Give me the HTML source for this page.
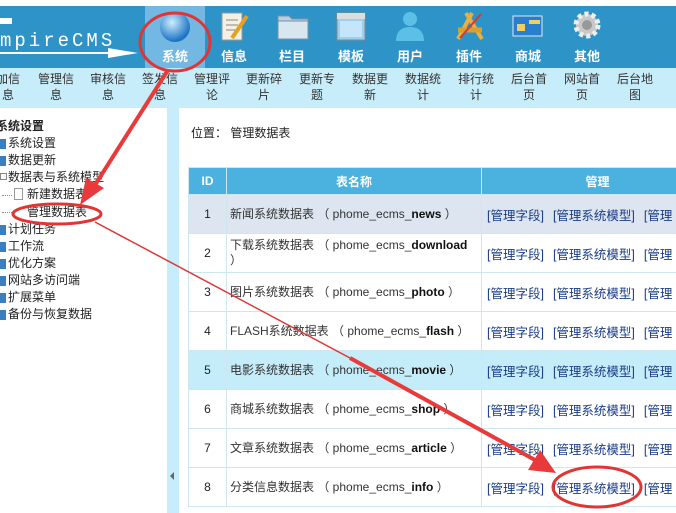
<!DOCTYPE html>
<html><head><meta charset="utf-8"><style>
*{margin:0;padding:0;box-sizing:border-box}
body{width:676px;height:513px;overflow:hidden;position:relative;background:#fff;font-family:"Liberation Sans","Noto Sans CJK SC",sans-serif;font-size:12px;color:#222}
.a{position:absolute}
#hdr{left:0;top:6px;width:676px;height:62px;background:#2e93c6}
#sel{left:145px;top:6px;width:60px;height:62px;background:#72b8e2}
.lbl{color:#fff;font-weight:bold;font-size:13px;width:50px;text-align:center;top:46px}
#nav{left:0;top:68px;width:676px;height:40px;background:#c8edfa}
.ni{top:71px;width:44px;text-align:center;line-height:16px;font-size:12px;color:#333}
#div{left:167px;top:108px;width:12px;height:405px;background:#c8edfa}
.tree{left:8px;font-size:12px;line-height:17px;color:#222}
.tree i{position:absolute;left:-8px;top:4px;width:6px;height:10px;background:#3a7fc1}
table{position:absolute;left:188px;top:167px;width:525px;table-layout:fixed;border-collapse:collapse;border:1px solid #7fb7cf}
td,th{border:1px solid #cfe6ef;font-size:12px}
th{background:#4bb1de;color:#fff;height:27px;font-weight:bold}
td{height:39px}
td.id{text-align:center}
td.n{padding-left:3px;line-height:15px;font-size:12px;color:#333}
td.m{color:#1a3c86;padding-left:5px;white-space:nowrap;font-size:12.5px}
td.m span{margin-right:9px}
b{font-weight:bold;color:#111}
</style></head><body>
<div class="a" id="hdr"></div>
<div class="a" id="sel"></div>
<div class="a" style="left:0;top:30px;color:#fff;font-size:19px;letter-spacing:3px;font-family:'Liberation Mono',monospace">mpireCMS</div>
<div class="a" style="left:0;top:18px;width:12px;height:6px;background:#fff"></div>
<div class="a" style="left:0;top:52px;width:112px;height:2px;background:#fff"></div>
<svg class="a" style="left:108px;top:46px" width="32" height="14"><polygon points="0,2 30,7 0,12" fill="#fff"/></svg>
<div class="a" style="left:160px;top:12px;width:30px;height:30px;border-radius:50%;background:radial-gradient(circle at 40% 35%,#cdeeff,#1d74c6 70%)"></div>
<svg class="a" style="left:220px;top:12px" width="30" height="30"><rect x="2" y="1" width="20" height="27" fill="#f4f1e4" stroke="#999"/><line x1="6" y1="8" x2="18" y2="8" stroke="#888"/><line x1="6" y1="13" x2="18" y2="13" stroke="#888"/><line x1="6" y1="18" x2="16" y2="18" stroke="#888"/><line x1="12" y1="26" x2="27" y2="4" stroke="#e8a020" stroke-width="4"/></svg>
<svg class="a" style="left:277px;top:12px" width="32" height="30"><path d="M1 4h11l3 3h16v20H1z" fill="#b9cfe0" stroke="#7a90a5"/><rect x="1" y="9" width="30" height="18" fill="#d8e6f0" stroke="#7a90a5"/></svg>
<svg class="a" style="left:336px;top:12px" width="30" height="30"><rect x="1" y="1" width="28" height="27" fill="#9bd0f0" stroke="#888"/><rect x="1" y="1" width="28" height="6" fill="#ddd"/><rect x="4" y="9" width="22" height="16" fill="#c5e6fa"/></svg>
<svg class="a" style="left:394px;top:10px" width="32" height="32"><circle cx="16" cy="9" r="7" fill="#5cc0e6"/><path d="M2 31c0-10 6-14 14-14s14 4 14 14z" fill="#5cc0e6"/></svg>
<svg class="a" style="left:454px;top:10px" width="32" height="32"><line x1="4" y1="29" x2="18" y2="3" stroke="#e8b040" stroke-width="4"/><line x1="12" y1="3" x2="28" y2="29" stroke="#e8b040" stroke-width="4"/><line x1="4" y1="20" x2="28" y2="20" stroke="#d9a030" stroke-width="5"/><line x1="6" y1="28" x2="27" y2="4" stroke="#d23a3a" stroke-width="2"/></svg>
<svg class="a" style="left:512px;top:14px" width="32" height="26"><rect x="1" y="2" width="29" height="20" fill="#2a7ed0" stroke="#dfe9f2"/><rect x="17" y="6" width="11" height="4" fill="#f2d060"/><rect x="5" y="10" width="8" height="7" fill="#f2d060"/></svg>
<svg class="a" style="left:572px;top:10px" width="30" height="32"><circle cx="15" cy="15" r="11" fill="#c8c8c8" stroke="#eee" stroke-width="5" stroke-dasharray="4 3"/><circle cx="15" cy="15" r="5" fill="#999"/></svg>
<div class="a lbl" style="left:150px">系统</div>
<div class="a lbl" style="left:209px">信息</div>
<div class="a lbl" style="left:267px">栏目</div>
<div class="a lbl" style="left:326px">模板</div>
<div class="a lbl" style="left:385px">用户</div>
<div class="a lbl" style="left:444px">插件</div>
<div class="a lbl" style="left:503px">商城</div>
<div class="a lbl" style="left:562px">其他</div>
<div class="a" id="nav"></div>
<div class="a ni" style="left:-14px">加信<br>息</div>
<div class="a ni" style="left:34px">管理信<br>息</div>
<div class="a ni" style="left:86px">审核信<br>息</div>
<div class="a ni" style="left:138px">签发信<br>息</div>
<div class="a ni" style="left:190px">管理评<br>论</div>
<div class="a ni" style="left:242px">更新碎<br>片</div>
<div class="a ni" style="left:295px">更新专<br>题</div>
<div class="a ni" style="left:348px">数据更<br>新</div>
<div class="a ni" style="left:401px">数据统<br>计</div>
<div class="a ni" style="left:454px">排行统<br>计</div>
<div class="a ni" style="left:507px">后台首<br>页</div>
<div class="a ni" style="left:560px">网站首<br>页</div>
<div class="a ni" style="left:613px">后台地<br>图</div>
<div class="a ni" style="left:668px">版</div>
<div class="a" id="div"></div>
<div class="a" style="left:170px;top:472px;width:0;height:0;border-top:4px solid transparent;border-bottom:4px solid transparent;border-right:4px solid #666"></div>
<div class="a" style="left:-4px;top:117px;font-weight:bold;font-size:12px">系统设置</div>
<div class="a tree" style="top:135px"><i></i>系统设置</div>
<div class="a tree" style="top:152px"><i></i>数据更新</div>
<div class="a tree" style="top:169px"><i style="background:none;border:1px solid #888;width:7px;height:7px"></i>数据表与系统模型</div>
<div class="a tree" style="left:27px;top:186px">新建数据表</div>
<div class="a" style="left:14px;top:188px;width:9px;height:12px;border:1px solid #999;background:#fff"></div>
<div class="a" style="left:2px;top:195px;width:10px;border-top:1px dotted #888"></div>
<div class="a" style="left:2px;top:212px;width:10px;border-top:1px dotted #888"></div>
<div class="a tree" style="left:27px;top:204px">管理数据表</div>
<div class="a tree" style="top:221px"><i></i>计划任务</div>
<div class="a tree" style="top:238px"><i></i>工作流</div>
<div class="a tree" style="top:255px"><i></i>优化方案</div>
<div class="a tree" style="top:272px"><i></i>网站多访问端</div>
<div class="a tree" style="top:289px"><i></i>扩展菜单</div>
<div class="a tree" style="top:306px"><i></i>备份与恢复数据</div>
<div class="a" style="left:191px;top:124px;font-size:12px">位置：  管理数据表</div>
<table>
<colgroup><col style="width:38px"><col style="width:255px"><col style="width:232px"></colgroup>
<tr><th>ID</th><th>表名称</th><th>管理</th></tr>
<tr style="background:#dde6f0"><td class="id">1</td><td class="n">新闻系统数据表 （ phome_ecms_<b>news</b> ）</td><td class="m"><span>[管理字段]</span><span>[管理系统模型]</span>[管理</td></tr>
<tr><td class="id">2</td><td class="n">下载系统数据表 （ phome_ecms_<b>download</b><br>）</td><td class="m"><span>[管理字段]</span><span>[管理系统模型]</span>[管理</td></tr>
<tr><td class="id">3</td><td class="n">图片系统数据表 （ phome_ecms_<b>photo</b> ）</td><td class="m"><span>[管理字段]</span><span>[管理系统模型]</span>[管理</td></tr>
<tr><td class="id">4</td><td class="n">FLASH系统数据表 （ phome_ecms_<b>flash</b> ）</td><td class="m"><span>[管理字段]</span><span>[管理系统模型]</span>[管理</td></tr>
<tr style="background:#c5ecf9"><td class="id">5</td><td class="n">电影系统数据表 （ phome_ecms_<b>movie</b> ）</td><td class="m"><span>[管理字段]</span><span>[管理系统模型]</span>[管理</td></tr>
<tr><td class="id">6</td><td class="n">商城系统数据表 （ phome_ecms_<b>shop</b> ）</td><td class="m"><span>[管理字段]</span><span>[管理系统模型]</span>[管理</td></tr>
<tr><td class="id">7</td><td class="n">文章系统数据表 （ phome_ecms_<b>article</b> ）</td><td class="m"><span>[管理字段]</span><span>[管理系统模型]</span>[管理</td></tr>
<tr><td class="id">8</td><td class="n">分类信息数据表 （ phome_ecms_<b>info</b> ）</td><td class="m"><span>[管理字段]</span><span>[管理系统模型]</span>[管理</td></tr>
</table>
<svg class="a" style="left:0;top:0" width="676" height="513">
<g fill="none" stroke="#e03535" stroke-width="3">
<ellipse cx="175" cy="42" rx="35" ry="29"/>
<ellipse cx="57" cy="214" rx="44" ry="10"/>
<ellipse cx="597" cy="487" rx="44" ry="20"/>
</g>
<line x1="168" y1="70" x2="95" y2="185" stroke="#e83a3a" stroke-width="4"/>
<polygon points="80,205 86,178 104,188" fill="#e83a3a"/>
<line x1="95" y1="222" x2="350" y2="358" stroke="#e03535" stroke-width="1.5"/>
<line x1="350" y1="358" x2="535" y2="460" stroke="#e83a3a" stroke-width="4"/>
<polygon points="556,473 528,470 540,450" fill="#e83a3a"/>
</svg>
</body></html>
